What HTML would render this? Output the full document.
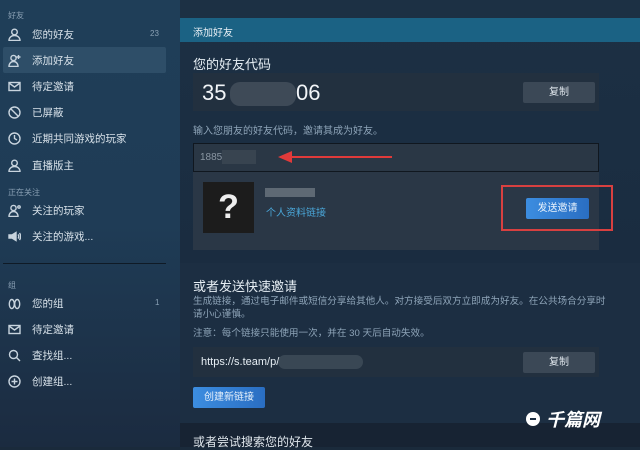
<!DOCTYPE html>
<html><head><meta charset="utf-8"><style>
*{margin:0;padding:0;box-sizing:border-box}
body{width:640px;height:447px;overflow:hidden;position:relative;font-family:"Liberation Sans","Noto Sans CJK SC",sans-serif;background:#1a2a3b;color:#dfe6ec}
.a{position:absolute;white-space:nowrap}
#side{position:absolute;left:0;top:0;width:180px;height:447px;background:linear-gradient(180deg,#1f3e58 0%,#1f3c56 50%,#1b2b40 100%)}
.lbl{font-size:8px;color:#8aa0b4}
.it{font-size:10.5px;color:#d6e0e8}
svg.ic{position:absolute;left:8px;width:13px;height:13px;fill:none;stroke:#c8d4de;stroke-width:1.4}
#main{position:absolute;left:180px;top:0;width:460px;height:447px;background:linear-gradient(180deg,#1c3044 0%,#1a2c40 60%,#1a2a3b 100%)}
.btn{position:absolute;background:#3b4856;color:#dfe6ec;font-size:10px;text-align:center;border-radius:2px}
.blue{position:absolute;background:linear-gradient(90deg,#3c8de0,#2a6ec2);color:#e8f2fc;font-size:10px;text-align:center;border-radius:2px}
.g{font-size:10px;color:#8ea4b8}
</style></head><body>
<div id="side">
<div class="a lbl" style="left:8px;top:10px">好友</div>
<div class="a" style="left:3px;top:47px;width:163px;height:26px;background:#2e4e68;border-radius:2px"></div>
<svg class="ic" style="top:28px" viewBox="0 0 13 13"><circle cx="6.5" cy="4" r="2.8"/><path d="M1 12.5c0-3 2.5-5 5.5-5s5.5 2 5.5 5z"/></svg><div class="a it" style="left:32px;top:27px">您的好友</div><div class="a lbl" style="left:150px;top:29px">23</div>
<svg class="ic" style="top:54px" viewBox="0 0 13 13"><circle cx="5.5" cy="4" r="2.6"/><path d="M1 12.5c0-3 2-5 4.5-5s4.5 2 4.5 5z"/><path d="M10.5 1v4M8.5 3h4"/></svg><div class="a it" style="left:32px;top:53px">添加好友</div>
<svg class="ic" style="top:80px" viewBox="0 0 13 13"><rect x="1" y="2.5" width="11" height="8"/><path d="M1 3l5.5 4 5.5-4"/></svg><div class="a it" style="left:32px;top:79px">待定邀请</div>
<svg class="ic" style="top:106px" viewBox="0 0 13 13"><circle cx="6.5" cy="6.5" r="5.5"/><path d="M2.6 2.6l7.8 7.8"/></svg><div class="a it" style="left:32px;top:105px">已屏蔽</div>
<svg class="ic" style="top:132px" viewBox="0 0 13 13"><circle cx="6.5" cy="6.5" r="5.5"/><path d="M6.5 3v3.5l2.5 1.5"/></svg><div class="a it" style="left:32px;top:131px">近期共同游戏的玩家</div>
<svg class="ic" style="top:159px" viewBox="0 0 13 13"><circle cx="6.5" cy="4" r="2.8"/><path d="M1 12.5c0-3 2.5-5 5.5-5s5.5 2 5.5 5z"/></svg><div class="a it" style="left:32px;top:158px">直播版主</div>
<div class="a lbl" style="left:8px;top:187px">正在关注</div>
<svg class="ic" style="top:204px" viewBox="0 0 13 13"><circle cx="5.5" cy="4" r="2.6"/><path d="M1 12.5c0-3 2-5 4.5-5s4.5 2 4.5 5z"/><circle cx="11" cy="3" r="1.2"/></svg><div class="a it" style="left:32px;top:203px">关注的玩家</div>
<svg class="ic" style="top:230px" viewBox="0 0 13 13"><path d="M1 5h3l4-2.5v8L4 8H1z" fill="#c8d4de"/><path d="M10 4.5c1 1 1 3 0 4M11.5 3c1.5 2 1.5 5 0 7"/></svg><div class="a it" style="left:32px;top:229px">关注的游戏...</div>
<div class="a" style="left:3px;top:263px;width:163px;height:1px;background:#0f1a26"></div>
<div class="a lbl" style="left:8px;top:280px">组</div>
<svg class="ic" style="top:297px" viewBox="0 0 13 13"><ellipse cx="3.8" cy="7" rx="2.5" ry="4.5"/><ellipse cx="9.2" cy="7" rx="2.5" ry="4.5"/></svg><div class="a it" style="left:32px;top:296px">您的组</div><div class="a lbl" style="left:155px;top:298px">1</div>
<svg class="ic" style="top:323px" viewBox="0 0 13 13"><rect x="1" y="2.5" width="11" height="8"/><path d="M1 3l5.5 4 5.5-4"/></svg><div class="a it" style="left:32px;top:322px">待定邀请</div>
<svg class="ic" style="top:349px" viewBox="0 0 13 13"><circle cx="5.5" cy="5.5" r="4"/><path d="M8.5 8.5l3.5 3.5"/></svg><div class="a it" style="left:32px;top:348px">查找组...</div>
<svg class="ic" style="top:375px" viewBox="0 0 13 13"><circle cx="6.5" cy="6.5" r="5.5"/><path d="M6.5 3.5v6M3.5 6.5h6"/></svg><div class="a it" style="left:32px;top:374px">创建组...</div>
</div>
<div id="main">
<div class="a" style="left:0;top:18px;width:460px;height:24px;background:#1b6284"></div>
<div class="a" style="left:13px;top:24px;font-size:10px;color:#e6eef4">添加好友</div>
<div class="a" style="left:13px;top:54px;font-size:13px;color:#e6eef4">您的好友代码</div>
<div class="a" style="left:13px;top:73px;width:406px;height:38px;background:#22303f"></div>
<div class="a" style="left:22px;top:80px;font-size:22px;color:#f2f5f8">35</div>
<div class="a" style="left:50px;top:82px;width:66px;height:24px;background:#4a5662;border-radius:10px;opacity:.7"></div>
<div class="a" style="left:116px;top:80px;font-size:22px;color:#f2f5f8">06</div>
<div class="btn" style="left:343px;top:82px;width:72px;height:21px;line-height:21px">复制</div>
<div class="a g" style="left:13px;top:122px">输入您朋友的好友代码，邀请其成为好友。</div>
<div class="a" style="left:13px;top:143px;width:406px;height:29px;background:#2a3745;border:1px solid #10171f"></div>
<div class="a" style="left:20px;top:152px;font-size:10px;color:#8a96a2">1885</div>
<div class="a" style="left:42px;top:150px;width:34px;height:14px;background:#3e4a56;opacity:.7"></div>
<div class="a" style="left:108px;top:156px;width:104px;height:2px;background:#e03a3a"></div>
<div class="a" style="left:98px;top:151px;width:0;height:0;border-top:6px solid transparent;border-bottom:6px solid transparent;border-right:14px solid #e03a3a"></div>
<div class="a" style="left:13px;top:172px;width:406px;height:78px;background:#2a3746"></div>
<div class="a" style="left:23px;top:182px;width:51px;height:51px;background:#1c1c1c;color:#eee;font-size:34px;font-weight:bold;text-align:center;line-height:51px">?</div>
<div class="a" style="left:85px;top:188px;width:50px;height:9px;background:#5e6974"></div>
<div class="a" style="left:86px;top:204px;font-size:10px;color:#4aa6d8">个人资料链接</div>
<div class="blue" style="left:346px;top:198px;width:63px;height:21px;line-height:21px">发送邀请</div>
<div class="a" style="left:321px;top:185px;width:112px;height:46px;border:2px solid #d84040"></div>
<div class="a" style="left:0;top:263px;width:460px;height:160px;background:#1c2e42"></div>
<div class="a" style="left:13px;top:276px;font-size:13px;color:#e6eef4">或者发送快速邀请</div>
<div class="a g" style="left:13px;top:293px;font-size:9.6px">生成链接，通过电子邮件或短信分享给其他人。对方接受后双方立即成为好友。在公共场合分享时</div>
<div class="a g" style="left:13px;top:306px;font-size:9.6px">请小心谨慎。</div>
<div class="a g" style="left:13px;top:325px;font-size:9.6px">注意：每个链接只能使用一次，并在 30 天后自动失效。</div>
<div class="a" style="left:13px;top:347px;width:406px;height:30px;background:#22303f"></div>
<div class="a" style="left:21px;top:356px;font-size:11px;color:#e6eef4">https://s.team/p/</div>
<div class="a" style="left:98px;top:355px;width:85px;height:14px;background:#4a5662;border-radius:7px;opacity:.6"></div>
<div class="btn" style="left:343px;top:352px;width:72px;height:21px;line-height:21px">复制</div>
<div class="blue" style="left:13px;top:387px;width:72px;height:21px;line-height:21px">创建新链接</div>
<div class="a" style="left:0;top:423px;width:460px;height:24px;background:#172333"></div>
<div class="a" style="left:13px;top:433px;font-size:12px;color:#dfe6ec">或者尝试搜索您的好友</div>
<div class="a" style="left:346px;top:412px;width:14px;height:14px;border-radius:50%;background:#fff"></div>
<div class="a" style="left:350px;top:418px;width:6px;height:2px;background:#1c2e42"></div>
<div class="a" style="left:366px;top:406px;font-size:18px;font-weight:bold;font-style:italic;color:#fff">千篇网</div>
</div>
</body></html>
